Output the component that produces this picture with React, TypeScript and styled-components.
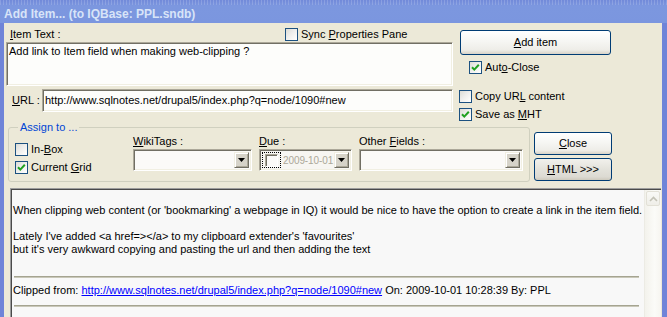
import React from 'react'
import styled, { createGlobalStyle, css } from 'styled-components'

const FONT = `'Liberation Sans', Arial, sans-serif`

const GlobalStyle = createGlobalStyle`
  html, body {
    margin: 0;
    padding: 0;
    background: #6f84d8;
  }
  body {
    font-family: ${FONT};
    font-size: 11px;
    line-height: 13px;
    color: #000;
  }
  u {
    text-underline-offset: 1px;
  }
`

// classic sunken 3d edge used by every edit / combo
const sunken = css`
  box-sizing: border-box;
  border: 1px solid;
  border-color: #aca899 #ffffff #ffffff #aca899;
  box-shadow: inset 1px 1px 0 #716f64, inset -1px -1px 0 #f1efe2;
`

const Window = styled.div`
  width: 667px;
  height: 317px;
  overflow: hidden;
  display: flex;
  flex-direction: column;
  background: #6f84d8;
`

const TitleBar = styled.div`
  flex: none;
  height: 23px;
  box-sizing: border-box;
  padding: 6px 0 0 4px;
  background:
    repeating-linear-gradient(90deg, rgba(255, 255, 255, 0.16) 0 1px, transparent 1px 3px) top left / 100% 5px no-repeat,
    linear-gradient(180deg, #7189d9 0%, #7c97df 25%, #7b96df 100%);
  color: #d8e4f8;
  font: bold 12px/16px ${FONT};
  white-space: nowrap;
`

const Frame = styled.div`
  flex: 1;
  min-height: 0;
  display: flex;
  padding: 0 5px 0 4px;
`

const Body = styled.div`
  flex: 1;
  min-width: 0;
  display: flex;
  flex-direction: column;
  background: #ece9d8;
  padding: 3px 0 0 2px;
`

const TopGrid = styled.div`
  display: grid;
  grid-template-columns: 447px 153px;
  column-gap: 6px;
  row-gap: 3px;
`

const Column = styled.div`
  display: flex;
  flex-direction: column;
`

const LabelRow = styled.div`
  height: 16px;
  display: flex;
  align-items: center;
  padding-left: 4px;
`

const FieldLabel = styled.span<{ $w?: number }>`
  flex: none;
  width: ${({ $w }) => ($w ? `${$w}px` : 'auto')};
  white-space: nowrap;
`

const TextArea = styled.div`
  ${sunken}
  height: 44px;
  padding: 2px 2px;
  background: #fdfdfb;
  white-space: nowrap;
  overflow: hidden;
`

const UrlRow = styled.div`
  height: 23px;
  display: flex;
  align-items: center;
  padding-left: 6px;
`

const Edit = styled.div`
  ${sunken}
  flex: 1;
  height: 23px;
  display: flex;
  align-items: center;
  padding: 0 2px;
  background: #fdfdfb;
  white-space: nowrap;
  overflow: hidden;
`

const RightStack = styled.div<{ $top: number; $gap: number }>`
  display: flex;
  flex-direction: column;
  align-items: flex-start;
  margin-top: ${({ $top }) => $top}px;
  gap: ${({ $gap }) => $gap}px;
`

const CheckRow = styled.label<{ $indent?: number }>`
  display: flex;
  align-items: center;
  gap: 3px;
  height: 13px;
  margin-left: ${({ $indent }) => $indent ?? 0}px;
  white-space: nowrap;
`

const CheckBox = styled.span`
  flex: none;
  width: 13px;
  height: 13px;
  box-sizing: border-box;
  border: 1px solid #1c5180;
  background: linear-gradient(135deg, #dcdcd5 0%, #ececea 40%, #f8f8f6 75%, #ffffff 100%);
  display: flex;
  align-items: center;
  justify-content: center;
`

const XpButton = styled.button<{ $w: number; $h: number; $grey?: boolean }>`
  flex: none;
  width: ${({ $w }) => $w}px;
  height: ${({ $h }) => $h}px;
  box-sizing: border-box;
  padding: 0;
  border: 1px solid #003c74;
  border-radius: 3px;
  background: ${({ $grey }) =>
    $grey
      ? 'linear-gradient(180deg, #f2f1ec 0%, #e3e2db 50%, #dcdad2 85%, #cdc9bd 100%)'
      : 'linear-gradient(180deg, #ffffff 0%, #f6f6f3 45%, #eeede8 82%, #d8d3c8 100%)'};
  color: #000;
  font: 11px/13px ${FONT};
  display: flex;
  align-items: center;
  justify-content: center;
`

const AssignRow = styled.div`
  display: flex;
  align-items: flex-start;
`

const GroupBox = styled.fieldset`
  width: 522px;
  min-width: 0;
  box-sizing: border-box;
  margin: 0 0 0 2px;
  padding: 0 6px 7px 6px;
  border: 1px solid #d0d0bf;
  border-radius: 3px;
`

const GroupTitle = styled.legend`
  margin-left: 3px;
  padding: 0 2px;
  color: #0046d5;
  line-height: 13px;
`

const AssignGrid = styled.div`
  display: grid;
  grid-template-columns: 111px 119px 93px 164px;
  column-gap: 7px;
  padding-top: 1px;
`

const ChecksColumn = styled.div`
  display: flex;
  flex-direction: column;
  gap: 5px;
  padding-top: 8px;
`

const FieldBlock = styled.div`
  display: flex;
  flex-direction: column;
  gap: 1px;
`

const Combo = styled.div<{ $bg?: string }>`
  ${sunken}
  height: 22px;
  display: flex;
  align-items: stretch;
  padding: 2px;
  background: ${({ $bg }) => $bg ?? '#fbfaf8'};
`

const ComboValue = styled.div`
  flex: 1;
  min-width: 0;
  display: flex;
  align-items: center;
  gap: 2px;
  color: #aca899;
  white-space: nowrap;
  overflow: hidden;
`

const DateText = styled.span`
  font-size: 10px;
  letter-spacing: -0.1px;
`

const DropButton = styled.span`
  flex: none;
  width: 15px;
  box-sizing: border-box;
  border: 1px solid;
  border-color: #f1efe2 #716f64 #716f64 #f1efe2;
  box-shadow: inset 1px 1px 0 #ffffff, inset -1px -1px 0 #aca899;
  background: #d6d3c9;
  display: flex;
  align-items: center;
  justify-content: center;
`

const FocusRing = styled.span`
  flex: none;
  align-self: stretch;
  box-sizing: border-box;
  padding: 1px 2px 0 2px;
  border: 1px dotted #000;
  display: flex;
  align-items: flex-start;
`

const ClassicBox = styled.span`
  width: 13px;
  height: 13px;
  box-sizing: border-box;
  border: 1px solid;
  border-color: #aca899 #ffffff #ffffff #aca899;
  box-shadow: inset 1px 1px 0 #716f64;
  background: #fbfaf8;
`

const ButtonColumn = styled.div`
  display: flex;
  flex-direction: column;
  gap: 3px;
  margin: 11px 0 0 4px;
`

const Pane = styled.div`
  flex: 1;
  min-height: 0;
  margin: 6px 1px 0 4px;
  display: flex;
  border-top: 1px solid #9d9d9d;
  border-left: 1px solid #9d9d9d;
  padding: 1px 0 0 1px;
  box-shadow: inset 1px 1px 0 #4a4a4a;
  background: #f8f8f8;
`

const Article = styled.div`
  flex: 1;
  min-width: 0;
  padding: 14px 5px 0 1px;
  overflow: hidden;
  white-space: nowrap;
`

const Para = styled.p<{ $mt?: number }>`
  margin: ${({ $mt }) => $mt ?? 0}px 0 0 0;
`

const Rule = styled.div<{ $mt: number }>`
  margin: ${({ $mt }) => $mt}px 0 0 1px;
  height: 0;
  border-top: 1px solid #a5a491;
  border-bottom: 1px solid #c9c8b9;
`

const Link = styled.a`
  color: #0000ff;
  text-decoration: underline;
`

const ScrollTrack = styled.div`
  flex: none;
  width: 17px;
  box-sizing: border-box;
  padding: 1px 1px 0 1px;
  border-left: 1px solid #ecebe4;
  background: linear-gradient(90deg, #f3f2ec 0%, #fbfbf8 60%, #f6f5f0 100%);
`

const ScrollButton = styled.div`
  height: 15px;
  box-sizing: border-box;
  border: 1px solid #e2e0d6;
  border-radius: 2px;
  background: linear-gradient(180deg, #f9f9f6 0%, #efeee8 100%);
  display: flex;
  align-items: center;
  justify-content: center;
`

const Check = () => (
  <svg width="9" height="9" viewBox="0 0 9 9">
    <polyline points="1,4.2 3.3,6.6 7.8,1.8" fill="none" stroke="#21a121" strokeWidth="2" />
  </svg>
)

const Arrow = () => (
  <svg width="7" height="4" viewBox="0 0 7 4">
    <polygon points="0,0 7,0 3.5,4" fill="#000" />
  </svg>
)

const Option: React.FC<{ checked?: boolean; indent?: number; children: React.ReactNode }> = ({ checked, indent, children }) => (
  <CheckRow $indent={indent}>
    <CheckBox>{checked && <Check />}</CheckBox>
    <span>{children}</span>
  </CheckRow>
)

const App: React.FC = () => {
  return (
    <>
      <GlobalStyle />
      <Window>
        <TitleBar>Add Item... (to IQBase: PPL.sndb)</TitleBar>
        <Frame>
          <Body>
            <TopGrid>
              <Column>
                <LabelRow>
                  <FieldLabel $w={275}>
                    <u>I</u>tem Text :
                  </FieldLabel>
                  <Option>
                    Sync <u>P</u>roperties Pane
                  </Option>
                </LabelRow>
                <TextArea>Add link to Item field when making web-clipping ?</TextArea>
              </Column>
              <RightStack $top={4} $gap={6}>
                <XpButton $w={151} $h={25} style={{ marginLeft: 1 }}>
                  <span>
                    <u>A</u>dd item
                  </span>
                </XpButton>
                <Option checked indent={10}>
                  Aut<u>o</u>-Close
                </Option>
              </RightStack>

              <UrlRow>
                <FieldLabel $w={30}>
                  <u>U</u>RL :
                </FieldLabel>
                <Edit>http://www.sqlnotes.net/drupal5/index.php?q=node/1090#new</Edit>
              </UrlRow>
              <RightStack $top={1} $gap={5}>
                <Option>
                  Copy UR<u>L</u> content
                </Option>
                <Option checked>
                  Save as <u>M</u>HT
                </Option>
              </RightStack>
            </TopGrid>

            <AssignRow>
              <GroupBox>
                <GroupTitle>Assign to ...</GroupTitle>
                <AssignGrid>
                  <ChecksColumn>
                    <Option>
                      In-<u>B</u>ox
                    </Option>
                    <Option checked>
                      Current <u>G</u>rid
                    </Option>
                  </ChecksColumn>
                  <FieldBlock>
                    <FieldLabel>
                      <u>W</u>ikiTags :
                    </FieldLabel>
                    <Combo>
                      <ComboValue />
                      <DropButton>
                        <Arrow />
                      </DropButton>
                    </Combo>
                  </FieldBlock>
                  <FieldBlock>
                    <FieldLabel>
                      <u>D</u>ue :
                    </FieldLabel>
                    <Combo $bg="#f7f6f2">
                      <ComboValue>
                        <FocusRing>
                          <ClassicBox />
                        </FocusRing>
                        <DateText>2009-10-01</DateText>
                      </ComboValue>
                      <DropButton>
                        <Arrow />
                      </DropButton>
                    </Combo>
                  </FieldBlock>
                  <FieldBlock>
                    <FieldLabel>
                      Other <u>F</u>ields :
                    </FieldLabel>
                    <Combo>
                      <ComboValue />
                      <DropButton>
                        <Arrow />
                      </DropButton>
                    </Combo>
                  </FieldBlock>
                </AssignGrid>
              </GroupBox>
              <ButtonColumn>
                <XpButton $w={78} $h={23}>
                  <span>
                    <u>C</u>lose
                  </span>
                </XpButton>
                <XpButton $w={78} $h={23} $grey>
                  <span>
                    <u>H</u>TML &gt;&gt;&gt;
                  </span>
                </XpButton>
              </ButtonColumn>
            </AssignRow>

            <Pane>
              <Article>
                <Para>
                  When clipping web content (or 'bookmarking' a webpage in IQ) it would be nice to have the option to
                  create a link in the item field.
                </Para>
                <Para $mt={13}>
                  Lately I've added {'<a href=></a>'} to my clipboard extender's 'favourites'
                  <br />
                  but it's very awkward copying and pasting the url and then adding the text
                </Para>
                <Rule $mt={20} />
                <Para $mt={6}>
                  Clipped from: <Link href="#">http://www.sqlnotes.net/drupal5/index.php?q=node/1090#new</Link> On:
                  2009-10-01 10:28:39 By: PPL
                </Para>
                <Rule $mt={8} />
              </Article>
              <ScrollTrack>
                <ScrollButton>
                  <svg width="9" height="6" viewBox="0 0 9 6">
                    <polyline points="1,5 4.5,1.5 8,5" fill="none" stroke="#c3c2b6" strokeWidth="1.6" />
                  </svg>
                </ScrollButton>
              </ScrollTrack>
            </Pane>
          </Body>
        </Frame>
      </Window>
    </>
  )
}

export default App
